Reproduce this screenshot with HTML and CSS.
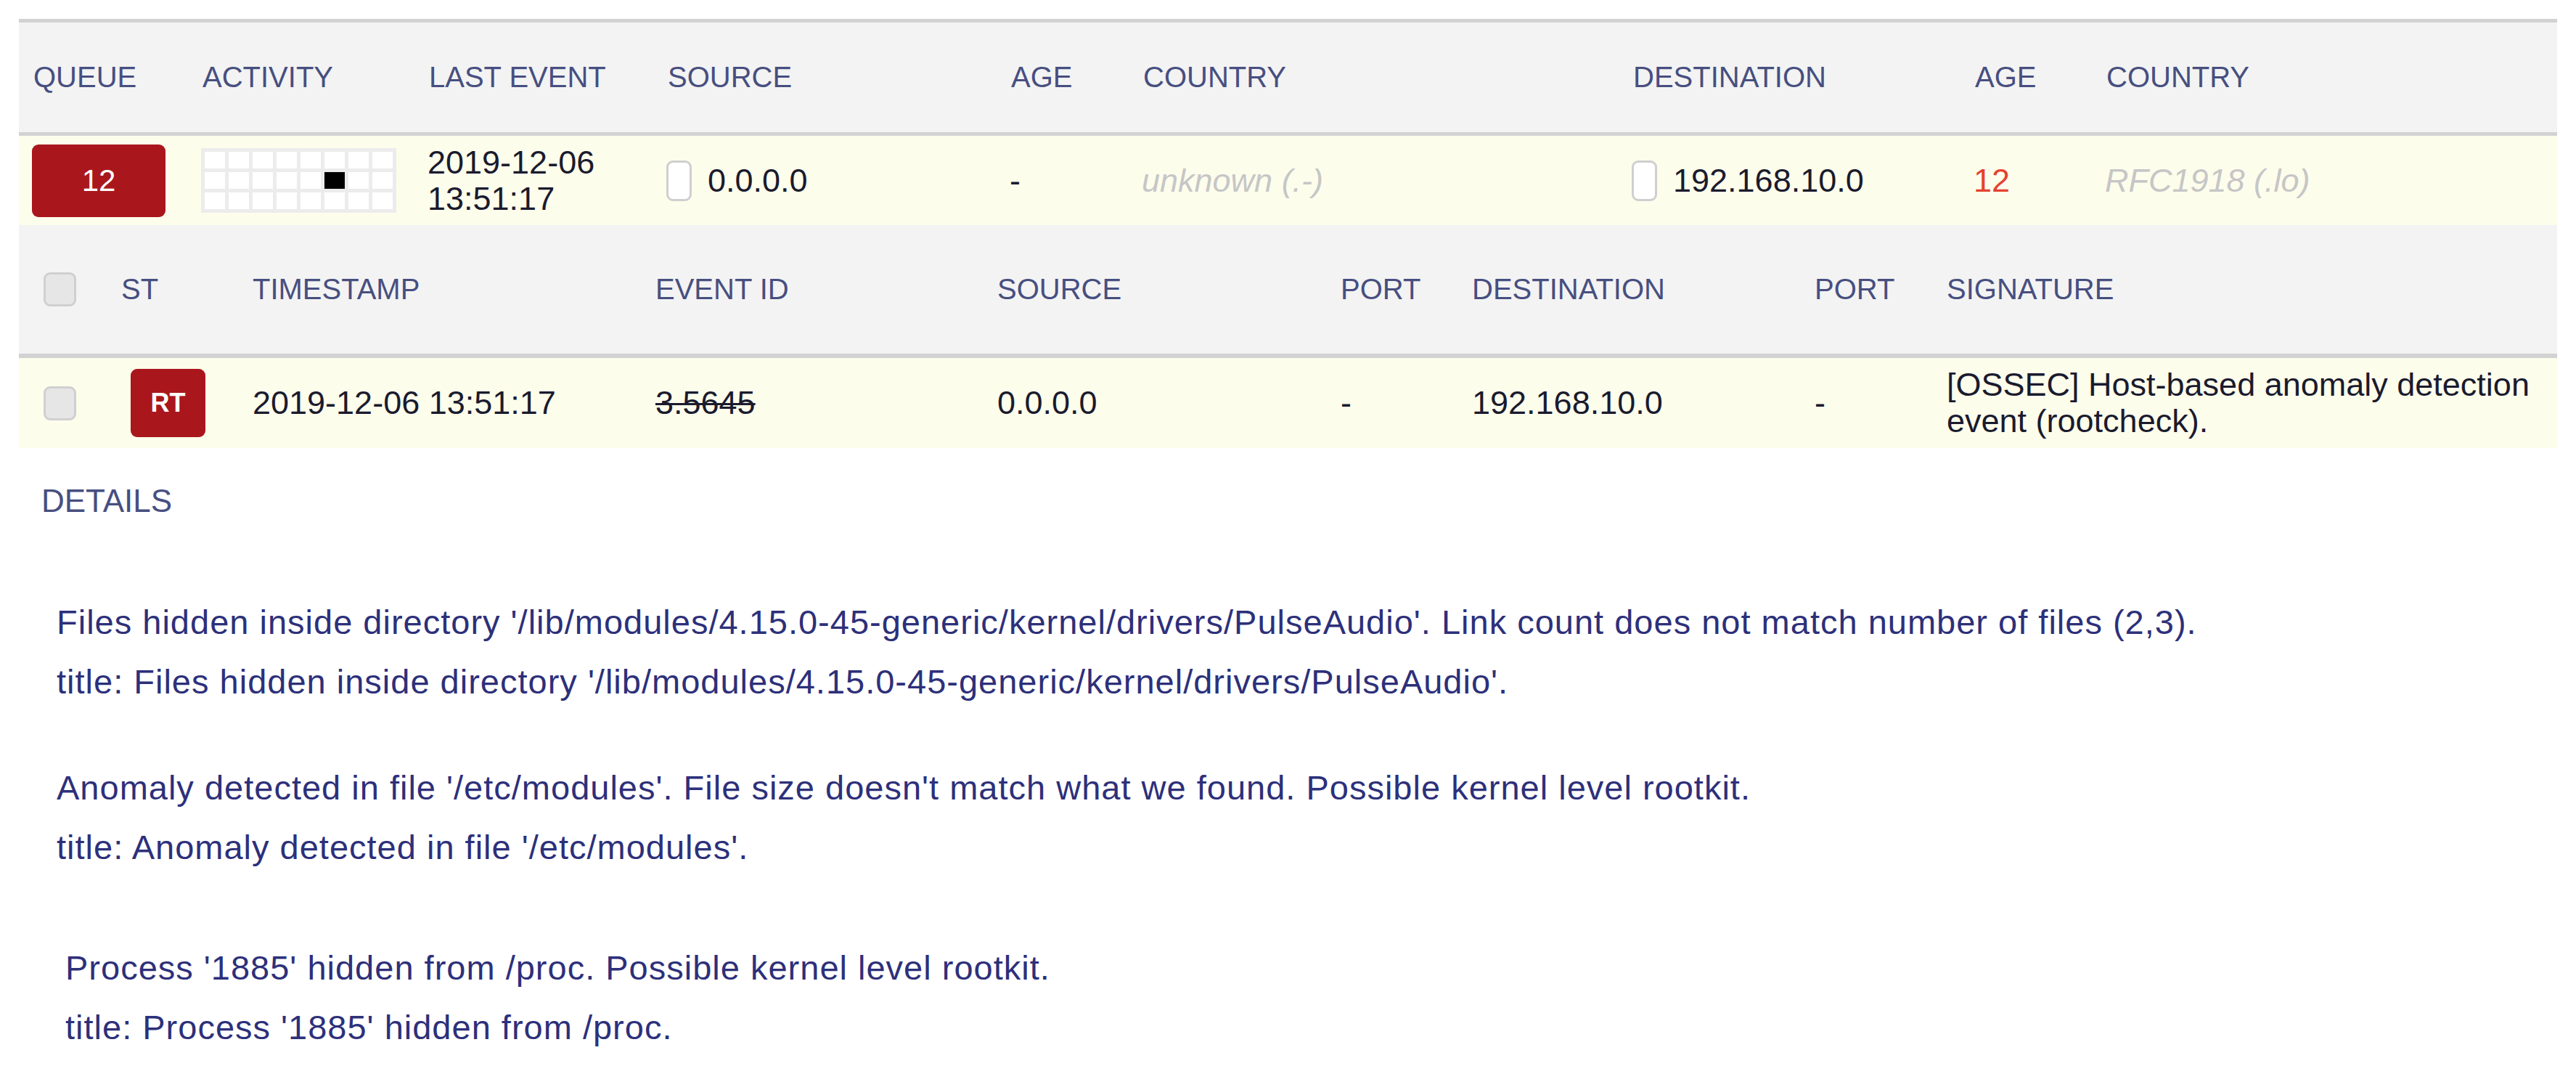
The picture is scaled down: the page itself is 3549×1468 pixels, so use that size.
FILE: index.html
```html
<!DOCTYPE html>
<html lang="en">
<head>
    <meta charset="UTF-8">
    <title>Event Queue</title>
    <link rel="stylesheet" href="styles.css">
</head>
<body>
    <div class="page">
        <div class="queue-table">
            <div class="queue-row queue-head">
                <div>QUEUE</div>
                <div>ACTIVITY</div>
                <div>LAST EVENT</div>
                <div>SOURCE</div>
                <div>AGE</div>
                <div>COUNTRY</div>
                <div>DESTINATION</div>
                <div>AGE</div>
                <div>COUNTRY</div>
            </div>
            <div class="queue-row queue-item">
                <div><span class="queue-badge">12</span></div>
                <div>
                    <div class="activity-grid">
                        <span></span><span></span><span></span><span></span><span></span><span></span><span></span><span></span>
                        <span></span><span></span><span></span><span></span><span></span><span class="hit"></span><span></span><span></span>
                        <span></span><span></span><span></span><span></span><span></span><span></span><span></span><span></span>
                    </div>
                </div>
                <div class="last-event">2019-12-06 13:51:17</div>
                <div class="ip"><span class="flag"></span>0.0.0.0</div>
                <div>-</div>
                <div class="country">unknown (.-)</div>
                <div class="ip"><span class="flag"></span>192.168.10.0</div>
                <div class="age-hot">12</div>
                <div class="country">RFC1918 (.lo)</div>
            </div>
        </div>

        <div class="event-table">
            <div class="event-row event-head">
                <div><span class="check"></span></div>
                <div>ST</div>
                <div>TIMESTAMP</div>
                <div>EVENT ID</div>
                <div>SOURCE</div>
                <div>PORT</div>
                <div>DESTINATION</div>
                <div>PORT</div>
                <div>SIGNATURE</div>
            </div>
            <div class="event-row event-item">
                <div><span class="check"></span></div>
                <div><span class="status-badge">RT</span></div>
                <div>2019-12-06 13:51:17</div>
                <div class="event-id">3.5645</div>
                <div>0.0.0.0</div>
                <div>-</div>
                <div>192.168.10.0</div>
                <div>-</div>
                <div class="signature">[OSSEC] Host-based anomaly detection event (rootcheck).</div>
            </div>
        </div>

        <div class="details">
            <div class="details-label">DETAILS</div>
            <div class="details-body">
                <p>Files hidden inside directory '/lib/modules/4.15.0-45-generic/kernel/drivers/PulseAudio'. Link count does not match number of files (2,3).<br>
                title: Files hidden inside directory '/lib/modules/4.15.0-45-generic/kernel/drivers/PulseAudio'.</p>
                <p>Anomaly detected in file '/etc/modules'. File size doesn't match what we found. Possible kernel level rootkit.<br>
                title: Anomaly detected in file '/etc/modules'.</p>
                <p class="indented">Process '1885' hidden from /proc. Possible kernel level rootkit.<br>
                title: Process '1885' hidden from /proc.</p>
            </div>
        </div>
    </div>
</body>
</html>
```

FILE: styles.css
```css
:root {
    --head-bg: #f3f3f3;
    --row-bg: #fdfdec;
    --border: #d2d2d2;
    --head-color: #474f80;
    --text-color: #1a1b2e;
    --detail-color: #2d307a;
    --badge-red: #a9171d;
}

body {
    margin: 0;
    background: white;
    font-family: "Liberation Sans", Arial, sans-serif;
    color: var(--text-color);
}

.page {
    padding: 26px 26px 0;
}

/* queue summary */

.queue-table {
    border-top: 5px solid var(--border);
}

.queue-row {
    display: grid;
    grid-template-columns: 233px 312px 329px 473px 182px 675px 471px 181px 1fr;
    align-items: center;
    padding-left: 18px;
}

.queue-head {
    height: 151px;
    background: var(--head-bg);
    border-bottom: 5px solid var(--border);
    font-size: 40px;
    color: var(--head-color);
}

.queue-head > div {
    padding-left: 2px;
}

.queue-item {
    height: 123px;
    background: var(--row-bg);
    font-size: 45px;
}

.queue-badge {
    display: flex;
    align-items: center;
    justify-content: center;
    width: 184px;
    height: 100px;
    border-radius: 9px;
    background: var(--badge-red);
    color: white;
    font-size: 42px;
}

.activity-grid {
    display: grid;
    grid-template-columns: repeat(8, 28px);
    grid-template-rows: repeat(3, 23px);
    gap: 5px;
    padding: 5px;
    width: max-content;
    background: #ececec;
}

.activity-grid span {
    background: white;
}

.activity-grid .hit {
    background: black;
}

.last-event {
    line-height: 50px;
    padding-right: 60px;
}

.ip {
    display: flex;
    align-items: center;
}

.flag {
    display: inline-block;
    width: 29px;
    height: 50px;
    margin-right: 22px;
    border: 3px solid #cfcfcf;
    border-radius: 9px;
    background: white;
}

.country {
    font-style: italic;
    color: #c6c6c6;
}

.age-hot {
    color: #e4422f;
}

/* event list */

.event-row {
    display: grid;
    grid-template-columns: 123px 181px 555px 471px 473px 181px 472px 182px 1fr;
    align-items: center;
    padding-left: 18px;
}

.event-head {
    height: 177px;
    background: var(--head-bg);
    border-bottom: 6px solid var(--border);
    font-size: 40px;
    color: var(--head-color);
}

.event-item {
    height: 124px;
    background: var(--row-bg);
    font-size: 45px;
}

.check {
    display: block;
    width: 39px;
    height: 41px;
    margin-left: 16px;
    border: 3px solid #d0d0d0;
    border-radius: 9px;
    background: #e6e6e6;
}

.status-badge {
    display: flex;
    align-items: center;
    justify-content: center;
    width: 103px;
    height: 94px;
    margin-left: 13px;
    border-radius: 9px;
    background: var(--badge-red);
    color: white;
    font-size: 36px;
    font-weight: bold;
}

.event-id {
    text-decoration: line-through;
    text-decoration-thickness: 3px;
}

.signature {
    line-height: 50px;
}

/* details */

.details {
    padding-top: 48px;
    color: var(--detail-color);
}

.details-label {
    padding-left: 31px;
    font-size: 44px;
    line-height: 50px;
    color: var(--head-color);
}

.details-body {
    padding: 101px 0 0 52px;
    font-size: 47px;
    letter-spacing: 1px;
    line-height: 82px;
}

.details-body p {
    margin: 0 0 64px;
}

.details-body p.indented {
    margin: 84px 0 0;
    padding-left: 12px;
}
```
